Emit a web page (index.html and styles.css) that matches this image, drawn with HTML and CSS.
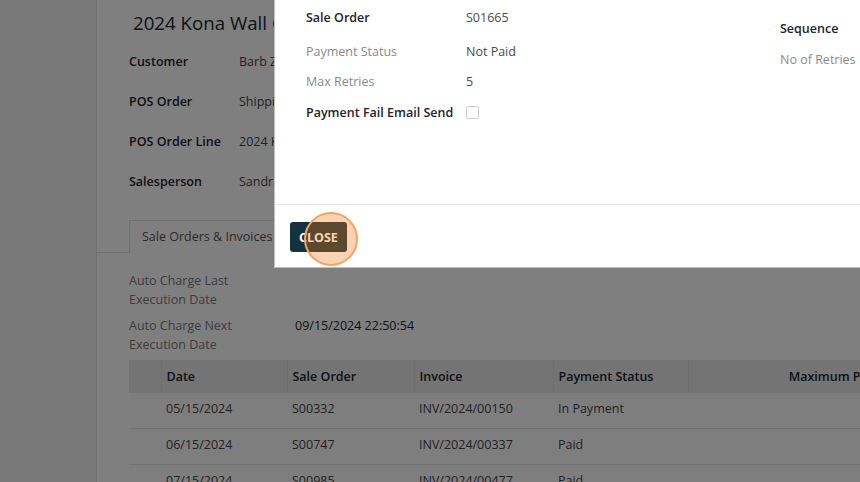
FILE: index.html
```html
<!DOCTYPE html>
<html lang="en">
<head>
    <meta charset="UTF-8">
    <meta name="viewport" content="width=device-width, initial-scale=1.0">
    <title>Auto Charge Schedule</title>
    <link rel="stylesheet" href="styles.css">
</head>
<body>
    <div class="page">
        <aside class="side"></aside>
        <main class="sheet">
            <h1 class="title">2024 Kona Wall Calendar</h1>
            <div class="fields">
                <div class="field-label">Customer</div>
                <div class="field-value">Barb Zimmerman</div>
                <div class="field-label">POS Order</div>
                <div class="field-value">Shipping/0042</div>
                <div class="field-label">POS Order Line</div>
                <div class="field-value">2024 Kona Wall Calendar</div>
                <div class="field-label">Salesperson</div>
                <div class="field-value">Sandra Keller</div>
            </div>

            <div class="notebook">
                <div class="tabs">
                    <div class="tab active">Sale Orders &amp; Invoices</div>
                    <div class="tab">Other Info</div>
                </div>
                <div class="tab-body">
                    <div class="info-grid">
                        <div class="info-label">Auto Charge Last<br>Execution Date</div>
                        <div class="info-value"></div>
                        <div class="info-label">Auto Charge Next<br>Execution Date</div>
                        <div class="info-value">09/15/2024 22:50:54</div>
                    </div>

                    <table class="orders">
                        <thead>
                            <tr>
                                <th class="col-select"></th>
                                <th class="col-date">Date</th>
                                <th class="col-so">Sale Order</th>
                                <th class="col-inv">Invoice</th>
                                <th class="col-status">Payment Status</th>
                                <th class="col-max">Maximum Payment Retries</th>
                            </tr>
                        </thead>
                        <tbody>
                            <tr>
                                <td></td><td>05/15/2024</td><td>S00332</td><td>INV/2024/00150</td><td>In Payment</td><td></td>
                            </tr>
                            <tr>
                                <td></td><td>06/15/2024</td><td>S00747</td><td>INV/2024/00337</td><td>Paid</td><td></td>
                            </tr>
                            <tr>
                                <td></td><td>07/15/2024</td><td>S00985</td><td>INV/2024/00477</td><td>Paid</td><td></td>
                            </tr>
                        </tbody>
                    </table>
                </div>
            </div>
        </main>
    </div>

    <div class="backdrop"></div>

    <div class="modal">
        <div class="modal-body">
            <div class="group">
                <div class="row first-row"><span class="label muted">Customer</span><span class="value">Barb Zimmerman</span></div>
                <div class="row so-row"><span class="label">Sale Order</span><span class="value">S01665</span></div>
                <div class="row"><span class="label muted">Payment Status</span><span class="value">Not Paid</span></div>
                <div class="row"><span class="label muted">Max Retries</span><span class="value">5</span></div>
                <div class="row check-row"><span class="label">Payment Fail Email Send</span><span class="value"><span class="checkbox"></span></span></div>
            </div>
            <div class="group group-right">
                <div class="row first-row"><span class="label muted">Invoice</span><span class="value"></span></div>
                <div class="row"><span class="label">Sequence</span><span class="value">3</span></div>
                <div class="row"><span class="label muted">No of Retries</span><span class="value">0</span></div>
            </div>
        </div>
        <div class="modal-footer">
            <button class="btn-close">Close</button>
        </div>
    </div>

    <div class="spotlight"></div>
</body>
</html>
```

FILE: styles.css
```css
html, body {
    margin: 0;
    height: 100%;
    overflow: hidden;
}
body {
    font-family: "Open Sans", "Noto Sans", sans-serif;
    font-size: 12.5px;
    color: #212529;
    background-color: #f0f0f0;
}
.page {
    display: flex;
    height: 100%;
}
.side {
    width: 96px;
    flex-shrink: 0;
    background-color: #f0f0f0;
    border-right: 1px solid #e0e0e0;
}
.sheet {
    flex: 1;
    background-color: #fff;
    padding: 8px 0 0 32px;
    overflow: hidden;
}
.title {
    margin: 0 0 14px 4px;
    font-size: 18.7px;
    font-weight: 400;
    line-height: 30px;
    color: #212529;
    white-space: nowrap;
}
.fields {
    display: grid;
    grid-template-columns: 110px 1fr;
    row-gap: 20px;
    line-height: 20px;
}
.field-label {
    font-weight: 600;
}
.field-value {
    color: #444;
    white-space: nowrap;
}
.notebook {
    margin-top: 28px;
    margin-left: -32px;
}
.tabs {
    display: flex;
    padding-left: 32px;
    border-bottom: 1px solid #dee2e6;
    height: 32px;
}
.tab {
    padding: 0 12px;
    line-height: 32px;
    color: #555;
    border: 1px solid transparent;
    border-bottom: none;
    white-space: nowrap;
}
.tab.active {
    border-color: #dee2e6;
    background-color: #fff;
    margin-bottom: -1px;
}
.tab-body {
    padding: 18px 0 0 32px;
}
.info-grid {
    display: grid;
    grid-template-columns: 166px 1fr;
    row-gap: 7px;
    line-height: 19px;
}
.info-label {
    color: #7a7a7a;
}
.info-value {
    color: #212529;
}
.orders {
    margin-top: 6px;
    border-collapse: collapse;
    table-layout: fixed;
    width: 880px;
    white-space: nowrap;
}
.orders th,
.orders td {
    box-sizing: border-box;
    padding: 0 5px;
    line-height: 20px;
}
.orders th {
    height: 33px;
    text-align: left;
    font-weight: 600;
    background-color: #e8e8e8;
    border-left: 1px solid #dcdcdc;
    color: #212529;
}
.orders th:first-child {
    border-left: none;
}
.orders td {
    padding-top: 6px;
    padding-bottom: 9px;
    color: #444;
    border-bottom: 1px solid #e4e4e4;
    background-color: #fcfcfc;
}
.col-select { width: 32px; }
.col-date { width: 126px; }
.col-so { width: 127px; }
.col-inv { width: 139px; }
.col-status { width: 135px; }
.orders th.col-max {
    text-align: right;
    padding-right: 57px;
}

.backdrop {
    position: fixed;
    inset: 0;
    background-color: rgba(0, 0, 0, 0.5);
}

.modal {
    position: absolute;
    left: 274px;
    top: -32px;
    width: 780px;
    background-color: #fff;
    border: 1px solid rgba(0, 0, 0, 0.25);
    border-top: none;
}
.modal-body {
    display: grid;
    grid-template-columns: 474px 1fr;
    padding: 0 0 0 31px;
    height: 236px;
    align-items: start;
}
.group .row {
    display: flex;
    align-items: center;
    height: 30px;
}
.group .label {
    width: 160px;
    flex-shrink: 0;
    font-weight: 600;
    color: #212529;
}
.group .label.muted {
    font-weight: 400;
    color: #8a8a8a;
}
.group .value {
    color: #4a4a4a;
}
.group .first-row,
.group .so-row {
    margin-bottom: 4px;
}
.group .check-row {
    margin-top: 1px;
}
.group-right {
    margin-top: 10px;
}
.group-right .row {
    height: 31px;
}
.group-right .label {
    width: 150px;
}
.checkbox {
    display: inline-block;
    width: 11px;
    height: 11px;
    margin-top: 4px;
    border: 1px solid #cfcfcf;
    border-radius: 2px;
}
.modal-footer {
    border-top: 1px solid #dee2e6;
    padding: 17px 15px 15px;
}
.btn-close {
    height: 30px;
    padding: 0 9px;
    border: none;
    border-radius: 3px;
    background-color: #15333f;
    color: #fff;
    font-family: inherit;
    font-size: 12.5px;
    font-weight: 700;
    text-transform: uppercase;
}

.spotlight {
    position: absolute;
    left: 304px;
    top: 212px;
    width: 50px;
    height: 50px;
    border-radius: 50%;
    border: 2px solid #f3a362;
    background-color: rgba(244, 118, 12, 0.32);
}
```
